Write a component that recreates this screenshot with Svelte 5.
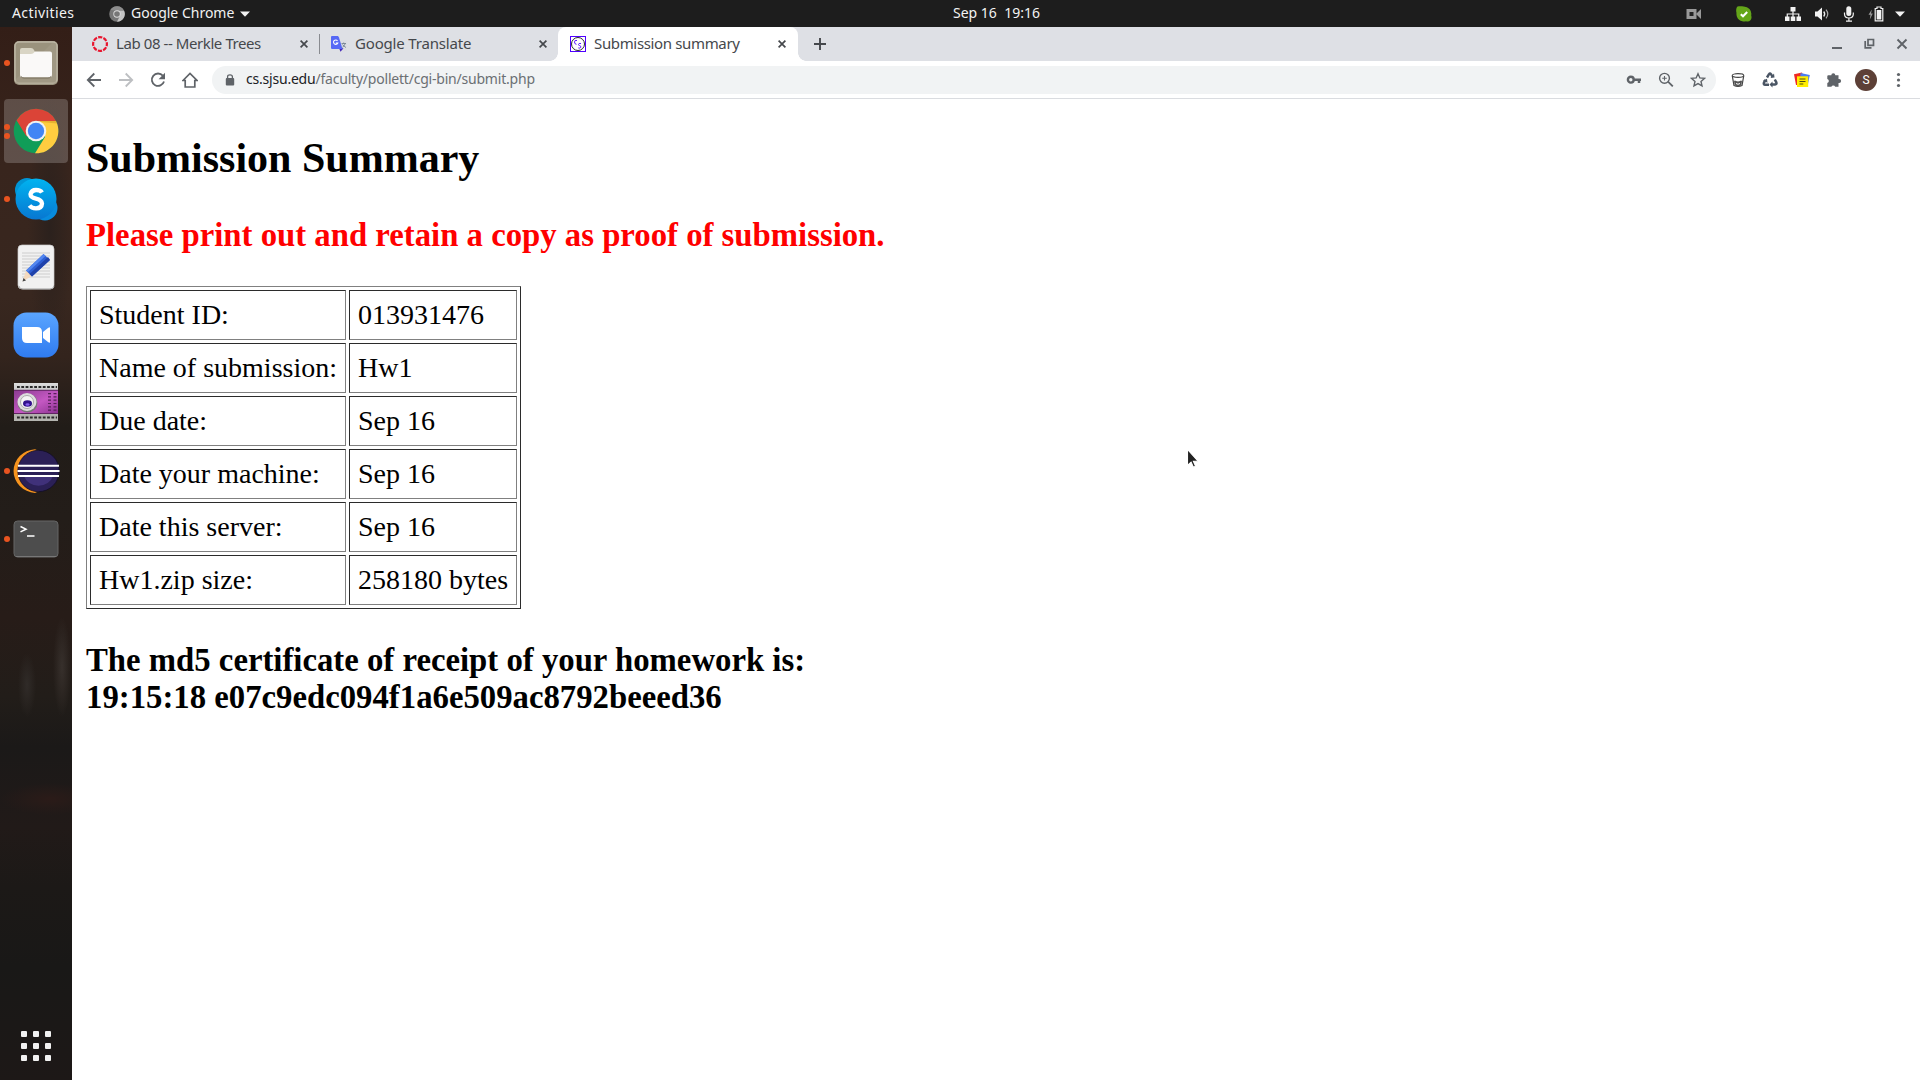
<script>
  const rows = [
    ['Student ID:', '013931476'],
    ['Name of submission:', 'Hw1'],
    ['Due date:', 'Sep 16'],
    ['Date your machine:', 'Sep 16'],
    ['Date this server:', 'Sep 16'],
    ['Hw1.zip size:', '258180 bytes']
  ];
  const dock = [
    { name: 'files', dots: 1 },
    { name: 'chrome', dots: 2, active: true },
    { name: 'skype', dots: 1 },
    { name: 'editor', dots: 0 },
    { name: 'zoom', dots: 0 },
    { name: 'recorder', dots: 0 },
    { name: 'eclipse', dots: 1 },
    { name: 'terminal', dots: 1 }
  ];
  const tabs = [
    { title: 'Lab 08 -- Merkle Trees', icon: 'canvas' },
    { title: 'Google Translate', icon: 'translate' },
    { title: 'Submission summary', icon: 'cs', active: true }
  ];
  const lines = [0, 1, 2, 3, 4, 5, 6, 7, 8];
</script>

<div class="desktop">
  <header class="topbar">
    <span class="activities">Activities</span>
    <div class="appmenu">
      <svg width="16" height="16" viewBox="0 0 16 16">
        <circle cx="8" cy="8" r="7.8" fill="#777" />
        <path d="M8 4.5h7A7.8 7.8 0 0 1 8 15.8L11.200 9.500z" fill="#c4c4c4" />
        <path d="M1.300 4A7.800 7.800 0 0 1 15 4.500H8z" fill="#8e8e8e" />
        <circle cx="8" cy="8" r="3.700" fill="#ddd" /><circle cx="8" cy="8" r="2.800" fill="#777" />
      </svg>
      <span class="appname">Google Chrome</span>
      <svg width="10" height="6" viewBox="0 0 10 6"><path d="M0 .5h10L5 5.700z" fill="#f2f2f2" /></svg>
    </div>
    <span class="clock">Sep 16&nbsp; 19:16</span>
    <div class="tray">
      <svg class="t-cam" width="16" height="12" viewBox="0 0 16 12"><path d="M.500 1h10v10H.500z" fill="#999" /><path d="M3.500 4h4v4h-4z" fill="#222" /><path d="M10 6l5-5v10z" fill="#999" /></svg>
      <svg class="t-sky" width="16" height="16" viewBox="0 0 16 16"><path d="M1.500.500C4-.200 6 .300 7.500.400a7.600 7.600 0 0 1 7.700 9C16.500 13 14 16.500 10 15.300A7.600 7.600 0 0 1 .500 7C-.100 5 0 2 1.500.500z" fill="#64a619" /><path d="M4.800 8.200l2.200 2.100 4.200-4.300" fill="none" stroke="#fff" stroke-width="2" /></svg>
      <svg class="t-net" width="16" height="14" viewBox="0 0 16 14" fill="#f2f2f2"><path d="M5.500 0h5v4.500h-5zM0 9.500h4.500V14H0zM5.750 9.500h4.500V14h-4.500zM11.500 9.500H16V14h-4.500z" /><path d="M2.250 10V7h11.500v3M8 4v6" fill="none" stroke="#f2f2f2" stroke-width="1.200" /></svg>
      <svg class="t-vol" width="16" height="14" viewBox="0 0 16 14"><path d="M1 4.500h2.500L8 .500v13L3.500 9.500H1z" fill="#f2f2f2" /><path d="M9.700 4.500q2 2.500 0 5" fill="none" stroke="#f2f2f2" stroke-width="1.300" /><path d="M12 2.700q3.500 4.300 0 8.600" fill="none" stroke="#aaa" stroke-width="1.200" /></svg>
      <svg class="t-mic" width="12" height="16" viewBox="0 0 12 16"><rect x="3.300" y=".3" width="5" height="9.700" rx="2.500" fill="#f2f2f2" /><path d="M1.500 6.500V8q0 4 4.400 4T10.300 8V6.500M5.900 12v2.500M3 15.200h6" fill="none" stroke="#f2f2f2" stroke-width="1.200" /></svg>
      <svg class="t-bat" width="16" height="16" viewBox="0 0 16 16"><path d="M3.800 3.500L.500 8.800h2L1.800 13.500l3-6h-1.800z" fill="#999" /><path d="M7.200 2.500H9V1h4v1.500h1.800v12.300H7.200z" fill="none" stroke="#f2f2f2" stroke-width="1.200" /><path d="M8.700 4h4.600v9.500H8.700z" fill="#f2f2f2" /></svg>
      <svg class="t-car" width="10" height="6" viewBox="0 0 10 6"><path d="M0 .5h10L5 5.700z" fill="#f2f2f2" /></svg>
    </div>
  </header>

  <div class="main">
    <nav class="dock">
      {#each dock as app}
        <div class="app" class:active={app.active}>
          <div class="dots">{#each Array(app.dots) as _}<i></i>{/each}</div>
          <svg width="48" height="48" viewBox="0 0 48 48">
            {#if app.name === 'files'}
              <rect x="2" y="2" width="44" height="44" rx="5" fill="#9b937e" />
              <rect x="3" y="3" width="42" height="41" rx="4" fill="#9a927d" stroke="#bcb5a4" stroke-width="1.500" />
              <path d="M4 40L40 4h4v40H4z" fill="#a59d89" opacity=".6" />
              <path d="M8 14v-3q0-2 2-2h9q2 0 3 2l1 2h15v8H8z" fill="#d9d5c5" />
              <path d="M8 15h11q2 0 4-2.500h15q2 0 2 2v21q0 3-3 3H11q-3 0-3-3z" fill="#faf9f8" />
              <path d="M9 37.500q1 1.500 3 1.500h24q2 0 3-1.500" fill="none" stroke="#776e5b" />
            {:else if app.name === 'chrome'}
              <circle cx="24" cy="24" r="22.300" fill="#109d58" />
              <path d="M24 14h20A22.300 22.300 0 0 1 23 46.300L33 30z" fill="#ffcd40" />
              <path d="M4.500 13.200A22.300 22.300 0 0 1 44 14H24L14.500 29.500z" fill="#db4437" />
              <path d="M24 14h20l1 2.500L29 15z" fill="#b58518" opacity=".35" />
              <circle cx="24" cy="24" r="10.300" fill="#f1f1f1" /><circle cx="24" cy="24" r="8.200" fill="#4285f4" />
            {:else if app.name === 'skype'}
              <circle cx="15" cy="15" r="12" fill="#0095d6" /><circle cx="33" cy="33" r="12.500" fill="#078bdd" />
              <circle cx="24" cy="24" r="20.500" fill="url(#sky)" />
              <path d="M30 17.500Q28.500 15 24 15t-5.500 4.300q0 3.200 5.500 4.400t6 4.800q-.300 4.800-6 4.800-4.500 0-6.500-2.800" fill="none" stroke="#fff" stroke-width="4.300" />
            {:else if app.name === 'editor'}
              <rect x="6" y="2" width="36" height="44" rx="4" fill="#f1f1f1" stroke="#ccc" stroke-width=".700" />
              <path d="M7 43q0 3 4 3h27q4 0 4-3" fill="none" stroke="#aaa" />
              {#each lines as n}<path d={`M10 ${10 + n * 3}h28`} stroke="#c9c9c9" stroke-width=".9" />{/each}
              <path d="M10.500 38.500l4-12 6 6z" fill="#f4d9bd" /><path d="M10.500 38.500l1-3.500 2.500 2.400z" fill="#444" />
              <path d="M14 27.500L31.500 11l6.500 6-18 16.500z" fill="#2e5fd4" /><path d="M17.500 31L36 14l2 3-18 16.500z" fill="#1f42ab" /><path d="M14 27.500L31.500 11l2 2L16 29z" fill="#5286f0" />
            {:else if app.name === 'zoom'}
              <rect x="1.500" y="1.500" width="45" height="45" rx="13" fill="url(#zm)" />
              <path d="M10 16h15q5 0 5 5v11H15q-5 0-5-5z" fill="#fff" /><path d="M31 21l5-4q2-1.500 2 0v14q0 1.500-2 0l-5-4z" fill="#fff" />
            {:else if app.name === 'recorder'}
              <rect x="2" y="4" width="44" height="38" fill="url(#silver)" />
              <rect x="2" y="11" width="44" height="24" fill="url(#purple)" />
              <path d="M5 8h40M5 38.500h40" stroke="#292929" stroke-width="2.200" stroke-dasharray="2.800 1.500" />
              <path d="M2 11.300h44M2 34.500h44" stroke="#602561" />
              <path d="M37.500 14v18M43 14v18" stroke="#572058" stroke-width="3" stroke-dasharray="1.200 2.100" />
              <ellipse cx="15.500" cy="24" rx="10" ry="9.500" fill="#777" /><ellipse cx="15" cy="23" rx="9.500" ry="9" fill="#ddd" /><circle cx="15" cy="23" r="6.500" fill="#f4f4f4" stroke="#aaa" /><ellipse cx="15.500" cy="24.500" rx="4.500" ry="3.300" fill="#32118b" /><ellipse cx="15.500" cy="25.500" rx="2" ry="1.200" fill="#865ff0" />
            {:else if app.name === 'eclipse'}
              <path d="M23 2.200A23 21.900 0 0 0 23 45.900L27 44V4z" fill="#f7941e" />
              <circle cx="26.500" cy="24" r="20.700" fill="#2b2056" stroke="#120c27" stroke-width=".8" />
              <path d="M12 29a15 13 0 0 0 29 0z" fill="#40317a" />
              <path d="M6 18.800h41M5.500 24h42M6 29h41" stroke="#fff" stroke-width="2.100" />
            {:else}
              <rect x="2" y="6" width="44" height="36" rx="3.500" fill="#4d4d4d" stroke="#666" stroke-width="1" />
              <path d="M4 41.500h40" stroke="#777" />
              <path d="M8.500 11.500l5.500 2.700-5.500 2.700M15 21h7.500" fill="none" stroke="#fff" stroke-width="1.500" />
            {/if}
          </svg>
        </div>
      {/each}
      <div class="launcher">{#each lines as n}<b></b>{/each}</div>
    </nav>

    <section class="browser">
      <div class="tabstrip">
        {#each tabs as tab, i}
          <div class="tab" class:active={tab.active} class:divided={i === 0}>
            <svg width="16" height="16" viewBox="0 0 16 16">
              {#if tab.icon === 'canvas'}
                <circle cx="8" cy="8" r="6.900" fill="none" stroke="#e8152e" stroke-width="2.200" stroke-dasharray="4.200 1.219" stroke-dashoffset="2.100" />
              {:else if tab.icon === 'translate'}
                <path d="M6 4h9q1 0 1 1v9.500q0 1-1 1H9z" fill="#dcdee3" /><path d="M8 12l1.500 3.700 3-3.500z" fill="#4527b8" />
                <path d="M1 0h6l1 1.500 3.500 11.500H1.200Q0 13 0 12V1q0-1 1-1z" fill="#5668f5" />
                <path d="M6.500 4.800A2.200 2.200 0 1 0 6.800 7H4.800" fill="none" stroke="#fff" stroke-width="1.100" />
                <path d="M10.500 7.500h4.500M12.700 6.500v1M14.300 7.500q-1 2.500-3 4M11.500 8.500q1.500 2 3.500 3" fill="none" stroke="#6a7b8a" stroke-width=".8" />
              {:else}
                <rect x=".5" y=".5" width="15" height="15" fill="#fff" stroke="#4f00ff" />
                <circle cx="8" cy="8" r="6.500" fill="none" stroke="#111" stroke-width=".9" />
                <path d="M7 4.500Q4.500 3.700 4.500 6t2 2.300M11 7.500q-2.500-.5-2.500 1 0 1 1.200 1.100 1.600.300 1 1.900-.700 1-2.400.4" fill="none" stroke="#4f00ff" stroke-width=".9" />
              {/if}
            </svg>
            <span class={`title ${tab.icon}`}>{tab.title}</span>
            <svg class="x" width="8" height="8" viewBox="0 0 8 8"><path d="M.6.6l6.800 6.800M7.400.6L.6 7.400" stroke="#45484c" stroke-width="1.700" /></svg>
          </div>
        {/each}
        <svg class="plus" width="12" height="12" viewBox="0 0 12 12"><path d="M6 0v12M0 6h12" stroke="#45484c" stroke-width="1.900" /></svg>
        <div class="winctl">
          <svg width="12" height="12" viewBox="0 0 12 12"><path d="M1 10h10" stroke="#5f6368" stroke-width="2" /></svg>
          <svg width="12" height="12" viewBox="0 0 12 12"><path d="M4 1.500H9.500V7.300H4zM1.200 3v6.800H7.500" fill="none" stroke="#5f6368" stroke-width="1.700" /></svg>
          <svg width="12" height="12" viewBox="0 0 12 12"><path d="M1.500 1.500l9 9M10.500 1.500l-9 9" stroke="#5f6368" stroke-width="1.900" /></svg>
        </div>
      </div>

      <div class="toolbar">
        <div class="navs">
          <svg width="16" height="16" viewBox="0 0 16 16"><path d="M15 8H2M8.300 1.500L1.800 8l6.500 6.500" fill="none" stroke="#5f6368" stroke-width="1.800" /></svg>
          <svg width="16" height="16" viewBox="0 0 16 16"><path d="M1 8h13M7.700 1.500L14.200 8l-6.500 6.500" fill="none" stroke="#bdbfc2" stroke-width="1.800" /></svg>
          <svg width="16" height="16" viewBox="0 0 16 16"><path d="M12.800 3.700A6.200 6.200 0 1 0 14 9.500" fill="none" stroke="#5f6368" stroke-width="1.800" /><path d="M15 .800v6.400H8.600z" fill="#5f6368" /></svg>
          <svg width="16" height="16" viewBox="0 0 16 16"><path d="M1 8.500L8 1.500l7 7h-2.200V15H3.200V8.500z" fill="none" stroke="#5f6368" stroke-width="1.700" /></svg>
        </div>
        <div class="omnibox">
          <svg width="10" height="12" viewBox="0 0 10 12"><rect x=".8" y="4" width="8.400" height="7.600" rx="1" fill="#5f6368" /><path d="M2.600 5V2.800q0-2 2.400-2t2.400 2V5" fill="none" stroke="#5f6368" stroke-width="1.300" /></svg>
          <span class="url"><em>cs.sjsu.edu</em>/faculty/pollett/cgi-bin/submit.php</span>
          <div class="omniicons">
            <svg width="16" height="16" viewBox="0 0 16 16"><circle cx="4.800" cy="7.700" r="2.900" fill="none" stroke="#5f6368" stroke-width="2.400" /><path d="M8 7.700h7M13 7v4" fill="none" stroke="#5f6368" stroke-width="2.500" /></svg>
            <svg width="16" height="16" viewBox="0 0 16 16"><circle cx="6.500" cy="6.300" r="4.900" fill="none" stroke="#5f6368" stroke-width="1.400" /><path d="M10 9.700l4.800 4.700" stroke="#5f6368" stroke-width="1.800" /><path d="M4.200 6.300h4.600M6.500 4v4.600" stroke="#5f6368" stroke-width="1.100" /></svg>
            <svg width="16" height="16" viewBox="0 0 16 16"><path d="M8 1.800l1.850 4.150 4.550.450-3.400 3.050 1 4.500L8 11.600l-4 2.350 1-4.500L1.600 6.400l4.550-.450z" fill="none" stroke="#5f6368" stroke-width="1.400" /></svg>
          </div>
        </div>
        <div class="exts">
          <svg width="16" height="16" viewBox="0 0 16 16"><ellipse cx="8" cy="3.500" rx="5.800" ry="1.900" fill="#fff" stroke="#444" stroke-width="1.100" /><path d="M2.300 4L4 13.500q4 2 8 0L13.700 4" fill="none" stroke="#444" stroke-width="1.200" /><path d="M4 9q1-1 2 0l2 .5 2-.5q1-1 2 0l-.7 4.500q-3.300 1.500-6.600 0z" fill="#555" /><path d="M6 11.500q2 1.500 4 0" fill="none" stroke="#fff" /></svg>
          <svg width="16" height="16" viewBox="0 0 16 16"><g fill="none" stroke="#4a5564" stroke-width="2.500"><path d="M5 5.500l2-3.300q1-1.200 2 0l1.500 2.500" /><path d="M12.800 7.500l1.500 2.800q.700 2-1.300 2.200H10" /><path d="M7 12.700H3.200q-2-.200-1.200-2.200L3.500 8" /></g><path d="M8.500 6l4-.5L12 1.500zM10.500 9.500v6l-3-3zM1 8.500l4-1.800.5 4z" fill="#4a5564" /></svg>
          <svg width="16" height="16" viewBox="0 0 16 16"><path d="M0 2.300l8-1.800 1 3-5.500 9.500H2z" fill="#ee2b24" /><path d="M6.500 1l9.300 2L14 12H6z" fill="#4b7df3" /><path d="M3 4.300h11.200V15H3z" fill="#ffee00" /><path d="M5.500 7h6M5.500 9.500h6M5.500 12h3.800" stroke="#4a4a14" stroke-width="1" /></svg>
          <svg width="16" height="16" viewBox="0 0 16 16"><path d="M2.300 3.300h3a2 2 0 1 1 4 0h3.200v3.800h.600a2 2 0 0 1 0 4h-.600v3.700H9.200a2 2 0 0 0-3.800 0H1.300v-3.900a2 2 0 0 0 0-3.900V4.300q0-1 1-1z" fill="#5f6368" /></svg>
          <span class="avatar">S</span>
          <svg width="16" height="16" viewBox="0 0 16 16" fill="#5f6368"><circle cx="8.500" cy="2.500" r="1.600" /><circle cx="8.500" cy="8" r="1.600" /><circle cx="8.500" cy="13.500" r="1.600" /></svg>
        </div>
      </div>

      <main class="page">
        <h1>Submission Summary</h1>
        <h2 class="notice">Please print out and retain a copy as proof of submission.</h2>
        <table>
          <tbody>
            {#each rows as [label, value]}
              <tr><td class="label">{label}</td><td class="value">{value}</td></tr>
            {/each}
          </tbody>
        </table>
        <h2>The md5 certificate of receipt of your homework is:<br />19:15:18 e07c9edc094f1a6e509ac8792beeed36</h2>
      </main>
    </section>
  </div>

  <svg class="pointer" width="14" height="22" viewBox="0 0 14 22"><path d="M1.500 1.500v16l3.600-3.400 2.300 5.100 2.200-1-2.200-5h4.700z" fill="#222" stroke="#fff" stroke-width="1.100" /></svg>

  <svg class="defs" width="0" height="0">
    <defs>
      <linearGradient id="sky" x2="0" y2="1"><stop stop-color="#00b3f0" /><stop offset="1" stop-color="#0877d1" /></linearGradient>
      <linearGradient id="zm" x2="0" y2="1"><stop stop-color="#5aa5ff" /><stop offset="1" stop-color="#2f7bf0" /></linearGradient>
      <linearGradient id="silver" x2="0" y2="1"><stop stop-color="#ddd" /><stop offset=".5" stop-color="#aaa" /><stop offset="1" stop-color="#b5b5b0" /></linearGradient>
      <linearGradient id="purple" x2="1" y2="1"><stop stop-color="#8a3c90" /><stop offset=".55" stop-color="#c458c2" /><stop offset="1" stop-color="#8b3291" /></linearGradient>
    </defs>
  </svg>
</div>

<style>
  :global(body) { margin: 0; overflow: hidden; }
  svg { display: block; flex: none; }
  .desktop { position: relative; width: 1920px; height: 1080px; display: flex; flex-direction: column; overflow: hidden; font-family: 'Noto Sans', 'Open Sans', sans-serif; background: #fff; }
  .topbar { height: 27px; flex: none; display: grid; grid-template-columns: 109px 800px 1fr auto; align-items: center; background: #1d1d1d; color: #f2f2f2; font-size: 14px; line-height: 25px; white-space: nowrap; }
  .activities { padding: 0 0 2px 12px; letter-spacing: 0.4px; }
  .appmenu { display: flex; align-items: center; gap: 6px; }
  .appname { padding-bottom: 2px; }
  .clock { padding: 0 0 2px 44px; }
  .tray { display: flex; align-items: center; padding-right: 15px; }
  .t-sky { margin-left: 34px; }
  .t-net { margin-left: 33px; }
  .t-vol { margin-left: 13px; }
  .t-mic { margin-left: 13px; }
  .t-bat { margin-left: 13px; }
  .t-car { margin-left: 11px; }

  .main { flex: 1; display: flex; min-height: 0; }
  .dock {
    width: 72px; box-sizing: border-box; padding: 4px 4px 19px; display: flex; flex-direction: column; gap: 4px;
    background:
      radial-gradient(ellipse 9px 50px at 62px 640px, #37302c, transparent),
      radial-gradient(ellipse 9px 32px at 27px 658px, #302b28, transparent),
      radial-gradient(ellipse 50px 16px at 50px 772px, #2b1b18, transparent),
      radial-gradient(ellipse 22px 130px at 50px 200px, #2b211d, transparent),
      linear-gradient(#331e17 0, #38251d 140px, #38271f 270px, #33241d 330px, #211c18 400px, #231d19 490px, #271c18 590px, #221d19 670px, #1b1918 720px, #211a18 800px, #1c1917 860px, #191817 940px, #1d1817 1053px);
  }
  .app { height: 64px; flex: none; position: relative; display: flex; align-items: center; justify-content: center; border-radius: 4px; }
  .app.active { background: rgba(255, 255, 255, 0.2); }
  .dots { position: absolute; left: 0; top: 0; height: 64px; display: flex; flex-direction: column; justify-content: center; gap: 3px; }
  .dots i { width: 6px; height: 6px; border-radius: 50%; background: #e95420; }
  .launcher { margin: auto auto 0; display: grid; grid-template-columns: repeat(3, 6px); gap: 6px; }
  .launcher b { width: 6px; height: 6px; border-radius: 1px; background: #f2f2f2; }

  .browser { flex: 1; min-width: 0; display: flex; flex-direction: column; }
  .tabstrip { height: 34px; flex: none; display: flex; align-items: center; padding-left: 8px; background: #dee0e5; }
  .tab { position: relative; box-sizing: border-box; width: 239px; height: 34px; display: flex; align-items: center; padding: 0 11px 0 12px; color: #45484c; font-size: 15px; line-height: 20px; white-space: nowrap; }
  .tab.divided::after { content: ''; position: absolute; right: -1px; top: 7px; width: 1px; height: 20px; background: #898b90; }
  .tab.active { width: 240px; padding-right: 12px; background: #fff; border-radius: 8px 8px 0 0; }
  .tab.active::before, .tab.active::after { content: ''; position: absolute; bottom: 0; width: 8px; height: 8px; }
  .tab.active::before { left: -8px; background: radial-gradient(circle at 0 0, transparent 7.5px, #fff 8px); }
  .tab.active::after { right: -8px; background: radial-gradient(circle at 100% 0, transparent 7.5px, #fff 8px); }
  .title { margin-left: 8px; padding-bottom: 2px; }
  .title.canvas { letter-spacing: -0.42px; }
  .title.translate { letter-spacing: -0.18px; }
  .title.cs { letter-spacing: -0.35px; }
  .x { margin-left: auto; }
  .plus { margin-left: 16px; }
  .winctl { margin-left: auto; display: flex; gap: 20.500px; padding-right: 12px; }

  .toolbar { height: 38px; flex: none; box-sizing: border-box; display: flex; align-items: center; padding: 0 14px; background: #fff; border-bottom: 1px solid #dadce0; }
  .navs { display: flex; gap: 16px; width: 126px; flex: none; }
  .omnibox { width: 1504px; height: 28px; box-sizing: border-box; border-radius: 14px; background: #f1f3f4; display: flex; align-items: center; padding: 0 10px 0 13px; }
  .url { margin-left: 11px; padding-bottom: 2px; font-size: 14px; line-height: 20px; letter-spacing: -0.21px; color: #6b6f73; white-space: nowrap; }
  .url em { font-style: normal; color: #202124; }
  .omniicons { margin-left: auto; display: flex; gap: 16px; }
  .exts { margin-left: 14px; display: flex; align-items: center; gap: 16px; }
  .avatar { width: 22px; height: 22px; margin: 0 -3px; border-radius: 50%; background: #5d4037; color: #fff; font: 12px/22px Roboto, sans-serif; text-align: center; }

  .page { flex: 1; padding: 0 14px; background: #fff; color: #000; font-family: 'Liberation Serif', serif; font-size: 28px; display: flow-root; }
  h1 { margin: 34.860px 0; font-size: 42px; line-height: 48px; }
  h2 { margin: 32.760px 0; font-size: 32.760px; line-height: 37px; }
  .notice { color: #f00; }
  table { border: 1px solid; border-color: #808080 #2b2b2b #2b2b2b #808080; border-spacing: 3px; border-collapse: separate; }
  td { box-sizing: border-box; height: 50px; padding: 8px; border: 1px solid; border-color: #2b2b2b #808080 #808080 #2b2b2b; line-height: 32px; white-space: nowrap; }
  .label { width: 256px; }
  .value { width: 168px; }
  .pointer { position: absolute; left: 1186px; top: 448px; }
  .defs { position: absolute; }
</style>
